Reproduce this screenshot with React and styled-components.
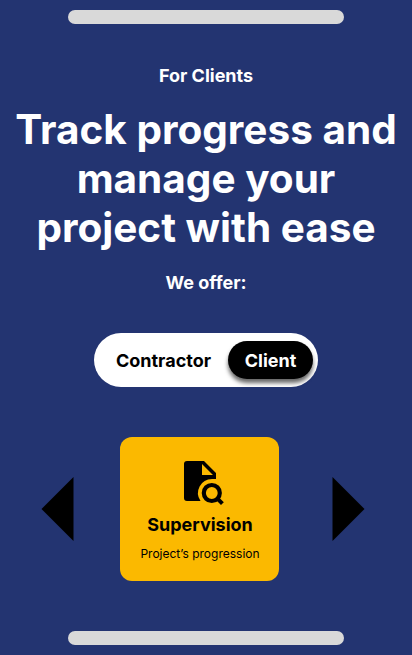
import React from "react";
import styled, { createGlobalStyle } from "styled-components";

const GlobalStyle = createGlobalStyle`
  * { box-sizing: border-box; }
  body { margin: 0; background: #233471; }
`;

const Page = styled.main`
  display: flex;
  flex-direction: column;
  align-items: center;
  width: 412px;
  height: 655px;
  padding-top: 10px;
  overflow: hidden;
  background: #233471;
  color: #fff;
  font-family: Inter, sans-serif;
`;

const Bar = styled.div`
  flex: none;
  width: 276px;
  height: 14px;
  border-radius: 7px;
  background: #d9d9d9;
`;

const Label = styled.p`
  margin: ${({ $top }) => $top}px 0 0;
  font-size: 18px;
  font-weight: 700;
  line-height: 22px;
`;

const Title = styled.h1`
  margin: 18px 0 0;
  font-size: 40.5px;
  font-weight: 700;
  line-height: 49px;
  text-align: center;
  white-space: nowrap;
`;

const Toggle = styled.div`
  display: flex;
  align-items: center;
  flex: none;
  width: 224px;
  height: 54px;
  margin-top: 39px;
  padding: 0 5px;
  border-radius: 27px;
  background: #fff;
`;

const Option = styled.button`
  flex: ${({ $active }) => ($active ? "none" : "1")};
  width: 85px;
  height: 38px;
  padding: 1px 0 0;
  border: 0;
  border-radius: 19px;
  background: ${({ $active }) => ($active ? "#000" : "transparent")};
  box-shadow: ${({ $active }) => ($active ? "0 4px 4px rgba(0, 0, 0, 0.6)" : "none")};
  color: ${({ $active }) => ($active ? "#fff" : "#000")};
  font: 700 18px/22px Inter, sans-serif;
`;

const Carousel = styled.section`
  display: flex;
  align-items: center;
  width: 324px;
  margin: 50px 6px 0 0;
`;

const Arrow = styled.button`
  display: flex;
  padding: 0;
  border: 0;
  background: none;
`;

const Card = styled.article`
  display: flex;
  flex-direction: column;
  align-items: center;
  width: 159px;
  height: 144px;
  margin: 0 53px 0 46px;
  padding: 20px 0 0 1px;
  border-radius: 12px;
  background: #fbb900;
  color: #000;
`;

const CardTitle = styled.h2`
  margin: 9px 0 0;
  font-size: 18px;
  font-weight: 700;
  line-height: 22px;
`;

const CardText = styled.p`
  margin: 10px 0 0;
  font-size: 12px;
  line-height: 15px;
`;

const Footer = styled(Bar)`
  margin-top: 50px;
`;

export default function App() {
  return (
    <>
      <GlobalStyle />
      <Page>
        <Bar />
        <Label $top={41}>For Clients</Label>
        <Title>Track progress and<br />manage your<br />project with ease</Title>
        <Label $top={20}>We offer:</Label>
        <Toggle>
          <Option>Contractor</Option>
          <Option $active>Client</Option>
        </Toggle>
        <Carousel>
          <Arrow aria-label="Previous">
            <svg width="33" height="64" viewBox="0 0 33 64"><path d="M32.500 0V64L0.500 32Z" /></svg>
          </Arrow>
          <Card>
            <svg width="48" height="48" viewBox="0 0 24 24">
              <path fillRule="evenodd" d="M14 2H5.500A1.500 1.500 0 0 0 4 3.500v17A1.500 1.500 0 0 0 5.500 22H12.260A7 7 0 0 1 18 11H20V8L14 2ZM13 3.500L18.500 9H13Z" />
              <circle cx="17.900" cy="18" r="4" fill="none" stroke="#000" strokeWidth="2.100" />
              <path d="M20.700 20.800L23.200 23.300" fill="none" stroke="#000" strokeWidth="2" />
            </svg>
            <CardTitle>Supervision</CardTitle>
            <CardText>Project’s progression</CardText>
          </Card>
          <Arrow aria-label="Next">
            <svg width="33" height="64" viewBox="0 0 33 64"><path d="M0.500 0V64L32.500 32Z" /></svg>
          </Arrow>
        </Carousel>
        <Footer />
      </Page>
    </>
  );
}
